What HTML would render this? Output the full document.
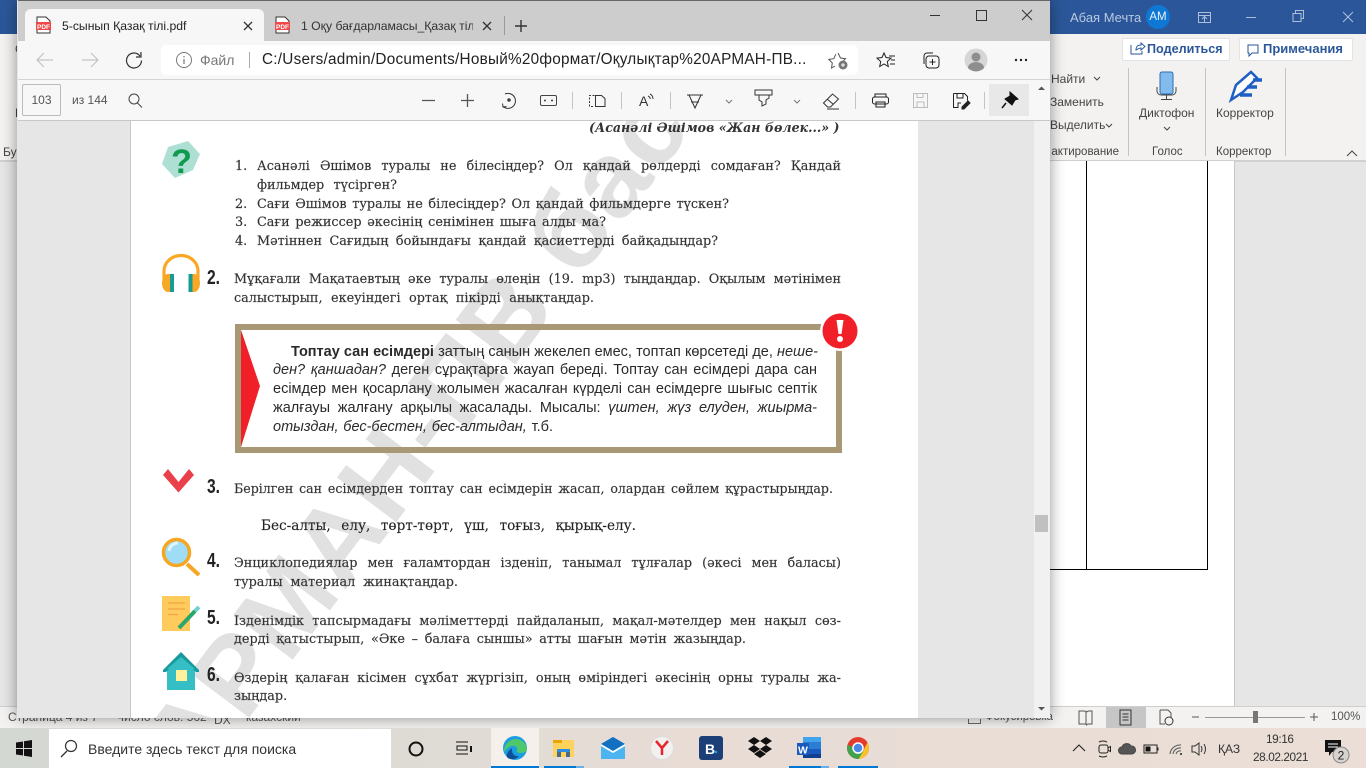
<!DOCTYPE html>
<html lang="ru">
<head>
<meta charset="utf-8">
<title>PDF</title>
<style>
html,body{margin:0;padding:0;width:1366px;height:768px;overflow:hidden;background:#e6e6e6}
body{position:relative;font-family:"Liberation Sans","Noto Sans CJK SC",sans-serif;color:#222}
div,span.a{position:absolute;box-sizing:border-box}
.t{white-space:nowrap}
.s{position:absolute;white-space:nowrap;font-family:"DejaVu Serif","Liberation Serif",serif;font-size:12.8px;line-height:18px;height:18px;margin-top:1.5px;color:#333;text-align:justify;text-align-last:justify;-webkit-text-stroke:.15px #333}
.b{position:absolute;white-space:nowrap;font-family:"Liberation Sans",sans-serif;font-size:14.5px;line-height:18px;height:18px;margin-top:1px;color:#2a2a2a;text-align:justify;text-align-last:justify}
.n{position:absolute;left:207px;margin-top:1px;font:bold 20px/22px "Liberation Sans",sans-serif;color:#222;transform:scaleX(.78);transform-origin:0 0}
.num{position:absolute;left:235px;margin-top:1.5px;font-family:"DejaVu Serif",serif;font-size:12.8px;line-height:18px;color:#333;white-space:nowrap;-webkit-text-stroke:.15px #333}
.r{position:absolute;font-size:12px;color:#444;white-space:nowrap;line-height:16px}
.sep{position:absolute;width:1px;background:#c4c4c4}
</style>
</head>
<body>
<!-- Word background -->
<div style="left:0;top:0;width:1366px;height:34px;background:#2b579a"></div>
<div style="left:0;top:34px;width:1366px;height:126px;background:#f3f2f1"></div>
<div style="left:0;top:160px;width:1366px;height:2px;background:#d0d0d0"></div>
<div style="left:1050px;top:161px;width:184px;height:546px;background:#fff"></div>
<div style="left:1234px;top:161px;width:1px;height:546px;background:#c6c6c6"></div>
<div style="left:1086px;top:161px;width:1px;height:409px;background:#000"></div>
<div style="left:1207px;top:161px;width:1px;height:409px;background:#000"></div>
<div style="left:1050px;top:569px;width:158px;height:1px;background:#000"></div>
<div class="t" style="left:1070px;top:10px;font-size:13px;line-height:16px;color:#b9c8df">Абая Мечта</div>
<div style="left:1146px;top:5px;width:24px;height:24px;border-radius:50%;background:#0f78d4;color:#e8f2fb;font-size:11.5px;line-height:24px;text-align:center">АМ</div>
<div style="left:1122px;top:38px;width:108px;height:23px;background:#fff;border:1px solid #e2e2e2;border-radius:2px"></div>
<div class="t" style="left:1147px;top:41px;font-size:12.6px;font-weight:bold;line-height:16px;color:#2b579a">Поделиться</div>
<div style="left:1239px;top:38px;width:114px;height:23px;background:#fff;border:1px solid #e2e2e2;border-radius:2px"></div>
<div class="t" style="left:1263px;top:41px;font-size:13px;font-weight:bold;line-height:16px;color:#2b579a">Примечания</div>
<div class="r" style="left:1051px;top:71px">Найти</div>
<div class="r" style="left:1050px;top:94px">Заменить</div>
<div class="r" style="left:1050px;top:117px">Выделить</div>
<div class="r" style="left:1050px;top:144px;width:69px;text-align:right;overflow:hidden;font-size:11.5px;direction:ltr">актирование</div>
<div class="r" style="left:1139px;top:105px">Диктофон</div>
<div class="r" style="left:1152px;top:144px;font-size:11.5px">Голос</div>
<div class="r" style="left:1216px;top:105px">Корректор</div>
<div class="r" style="left:1216px;top:144px;font-size:11.5px">Корректор</div>
<div class="sep" style="left:1128px;top:68px;height:88px"></div>
<div class="sep" style="left:1205px;top:68px;height:88px"></div>
<div class="sep" style="left:1285px;top:68px;height:88px"></div>
<div class="r" style="left:3px;top:144px">Буф</div>
<div class="r" style="left:15px;top:41px">С</div>
<div class="r" style="left:15px;top:105px">В</div>

<!-- Word status bar -->
<div style="left:0;top:706px;width:1366px;height:22px;background:#f3f2f1;border-top:1px solid #cfcfcf"></div>
<div class="t" style="left:8px;top:709px;font-size:12px;line-height:16px;color:#555">Страница 4 из 7</div>
<div class="t" style="left:116px;top:709px;font-size:12px;line-height:16px;color:#555">Число слов: 562</div>
<div class="t" style="left:214px;top:712px;font-size:12px;line-height:16px;color:#555">DX</div>
<div class="t" style="left:246px;top:709px;font-size:12px;line-height:16px;color:#555">казахский</div>
<div class="t" style="left:985px;top:709px;font-size:11.4px;line-height:16px;color:#555">Фокусировка</div>
<div style="left:968px;top:719px;width:13px;height:5px;border:1px solid #666;border-top:none"></div>
<div style="left:1106px;top:707px;width:40px;height:21px;background:#c6c6c6"></div>
<div class="t" style="left:1331px;top:709px;font-size:11.5px;line-height:16px;color:#555">100%</div>
<div style="left:1205px;top:717px;width:100px;height:1px;background:#999"></div>
<div style="left:1253px;top:711px;width:5px;height:12px;background:#777"></div>

<!-- Edge window -->
<div style="left:17px;top:0;width:1033px;height:718px;background:#e6e6e6;box-shadow:0 0 14px rgba(0,0,0,.42)"></div>
<div style="left:18px;top:0;width:1032px;height:1px;background:#666"></div>
<div style="left:18px;top:1px;width:1032px;height:40px;background:#cdcdcd"></div>
<div style="left:18px;top:41px;width:1032px;height:39px;background:#f7f7f7;border-bottom:1px solid #d4d4d4"></div>
<div style="left:18px;top:80px;width:1032px;height:41px;background:#f7f7f7;border-bottom:1px solid #c8c8c8"></div>
<div style="left:25px;top:9px;width:239px;height:33px;background:#f7f7f7;border-radius:6px 6px 0 0"></div>
<div class="t" style="left:62px;top:17px;font-size:12.2px;line-height:18px;color:#222">5-сынып Қазақ тілі.pdf</div>
<div class="t" style="left:301px;top:17px;width:172px;overflow:hidden;font-size:12.2px;line-height:18px;color:#333">1 Оқу бағдарламасы_Қазақ тілі</div>
<div style="left:161px;top:45px;width:697px;height:30px;background:#fff;border-radius:5px"></div>
<div class="t" style="left:200px;top:51px;font-size:14px;line-height:18px;color:#777">Файл</div>
<div style="left:249px;top:52px;width:1px;height:16px;background:#aaa"></div>
<div class="t" style="left:262px;top:51px;font-size:15.3px;line-height:18px;color:#222;letter-spacing:.25px">C:/Users/admin/Documents/Новый%20формат/Оқулықтар%20АРМАН-ПВ...</div>
<div style="left:22px;top:84px;width:39px;height:32px;border:1px solid #bbb;border-radius:2px;font-size:12px;line-height:30px;text-align:center;color:#555">103</div>
<div class="t" style="left:72px;top:92px;font-size:12px;line-height:16px;color:#555">из 144</div>
<div style="left:989px;top:84px;width:40px;height:32px;background:#e8e8e8;border-radius:2px"></div>
<div style="left:1034px;top:121px;width:16px;height:597px;background:#f1f1f1"></div>
<div style="left:1035px;top:515px;width:13px;height:17px;background:#c0c0c0"></div>

<!-- PDF page -->
<div style="left:130px;top:121px;width:788px;height:597px;background:#fff;border-left:1px solid #c8c8c8;overflow:hidden">
  <div class="t" style="left:36px;top:590px;font:bold 108px/108px 'Liberation Sans',sans-serif;color:#e1e1e1;transform:rotate(-53deg);transform-origin:0 50%;letter-spacing:2px">АРМАН-ПВ баспасы</div>
</div>

<div style="left:131px;top:121px;width:787px;height:14px;overflow:hidden">
  <div class="t" style="left:458px;top:-2px;font:italic bold 12.6px/18px 'DejaVu Serif',serif;color:#333">(Асанәлі Әшімов «Жан бөлек...» )</div>
</div>

<span class="num" style="top:156px">1.</span>
<div class="s" style="left:257px;top:156px;width:584px">Асанәлі Әшімов туралы не білесіңдер? Ол қандай рөлдерді сомдаған? Қандай</div>
<div class="s" style="left:257px;top:175px;width:140px">фильмдер түсірген?</div>
<span class="num" style="top:194px">2.</span>
<div class="s" style="left:257px;top:194px;width:472px">Сағи Әшімов туралы не білесіңдер? Ол қандай фильмдерге түскен?</div>
<span class="num" style="top:212px">3.</span>
<div class="s" style="left:257px;top:212px;width:349px">Сағи режиссер әкесінің сенімінен шыға алды ма?</div>
<span class="num" style="top:231px">4.</span>
<div class="s" style="left:257px;top:231px;width:461px">Мәтіннен Сағидың бойындағы қандай қасиеттерді байқадыңдар?</div>

<div class="n" style="top:266px">2.</div>
<div class="s" style="left:234px;top:269px;width:607px">Мұқағали Мақатаевтың әке туралы өлеңін (19. mp3) тыңдаңдар. Оқылым мәтінімен</div>
<div class="s" style="left:234px;top:288px;width:360px">салыстырып, екеуіндегі ортақ пікірді анықтаңдар.</div>

<!-- Rule box -->
<div style="left:235px;top:324px;width:607px;height:129px;border:6px solid #a89876"></div>
<div class="b" style="left:291px;top:342px;width:527px"><b>Топтау сан есімдері</b> заттың санын жекелеп емес, топтап көрсетеді де, <i>неше-</i></div>
<div class="b" style="left:273px;top:360px;width:544px"><i>ден? қаншадан?</i> деген сұрақтарға жауап береді. Топтау сан есімдері дара сан</div>
<div class="b" style="left:273px;top:379px;width:544px">есімдер мен қосарлану жолымен жасалған күрделі сан есімдерге шығыс септік</div>
<div class="b" style="left:273px;top:398px;width:544px">жалғауы жалғану арқылы жасалады. Мысалы: <i>үштен, жүз елуден, жиырма-</i></div>
<div class="b" style="left:273px;top:417px;width:280px"><i>отыздан, бес-бестен, бес-алтыдан,</i> т.б.</div>

<div class="n" style="top:475px">3.</div>
<div class="s" style="left:234px;top:478px;width:599px;font-size:12.6px">Берілген сан есімдерден топтау сан есімдерін жасап, олардан сөйлем құрастырыңдар.</div>
<div class="s" style="left:261px;top:515px;width:375px;font-size:13.6px;color:#222">Бес-алты, елу, төрт-төрт, үш, тоғыз, қырық-елу.</div>

<div class="n" style="top:549px">4.</div>
<div class="s" style="left:234px;top:553px;width:607px">Энциклопедиялар мен ғаламтордан ізденіп, танымал тұлғалар (әкесі мен баласы)</div>
<div class="s" style="left:234px;top:572px;width:224px">туралы материал жинақтаңдар.</div>

<div class="n" style="top:606px">5.</div>
<div class="s" style="left:234px;top:611px;width:607px">Ізденімдік тапсырмадағы мәліметтерді пайдаланып, мақал-мәтелдер мен нақыл сөз-</div>
<div class="s" style="left:234px;top:629px;width:512px">дерді қатыстырып, «Әке – балаға сыншы» атты шағын мәтін жазыңдар.</div>

<div class="n" style="top:663px">6.</div>
<div class="s" style="left:234px;top:668px;width:607px">Өздерің қалаған кісімен сұхбат жүргізіп, оның өміріндегі әкесінің орны туралы жа-</div>
<div class="s" style="left:234px;top:686px;width:56px">зыңдар.</div>

<!-- Taskbar -->
<div style="left:0;top:728px;width:1366px;height:40px;background:linear-gradient(90deg,#d4d8d2 0,#dedbd5 30%,#e8dcd5 50%,#eaded7 100%)"></div>
<div style="left:49px;top:729px;width:342px;height:39px;background:#fff"></div>
<div class="t" style="left:88px;top:740px;font-size:14px;line-height:18px;color:#333">Введите здесь текст для поиска</div>
<div style="left:491px;top:728px;width:48px;height:40px;background:#f5f0ec"></div>
<div style="left:491px;top:766px;width:48px;height:2px;background:#0078d4"></div>
<div style="left:544px;top:766px;width:32px;height:2px;background:#0078d4"></div>
<div style="left:576px;top:766px;width:8px;height:2px;background:#6aaee6"></div>
<div style="left:789px;top:766px;width:32px;height:2px;background:#0078d4"></div>
<div style="left:821px;top:766px;width:8px;height:2px;background:#6aaee6"></div>
<div style="left:838px;top:766px;width:40px;height:2px;background:#0078d4"></div>
<div class="t" style="left:1218px;top:741px;font-size:12px;line-height:16px;color:#333">ҚАЗ</div>
<div class="t" style="left:1266px;top:731px;font-size:11.8px;letter-spacing:-.4px;line-height:16px;color:#333">19:16</div>
<div class="t" style="left:1253px;top:749px;font-size:11.8px;letter-spacing:-.4px;line-height:16px;color:#333">28.02.2021</div>

<!-- All icons -->
<svg width="1366" height="768" viewBox="0 0 1366 768" style="position:absolute;left:0;top:0" fill="none">
  <!-- PDF tab icons -->
  <g>
    <path d="M37 17h9l4 4v12H37z" fill="#fff" stroke="#333" stroke-width="1"/>
    <rect x="36" y="22" width="15" height="8" fill="#f04848"/>
    <text x="43.5" y="28.8" font-size="6.5" font-weight="bold" text-anchor="middle" fill="#fff" font-family="Liberation Sans">PDF</text>
    <path d="M276 17h9l4 4v12h-13z" fill="#fff" stroke="#333" stroke-width="1"/>
    <rect x="275" y="22" width="15" height="8" fill="#f04848"/>
    <text x="282.5" y="28.8" font-size="6.5" font-weight="bold" text-anchor="middle" fill="#fff" font-family="Liberation Sans">PDF</text>
  </g>
  <g stroke="#333" stroke-width="1.3">
    <path d="M244 22l8 8M252 22l-8 8M483 22l8 8M491 22l-8 8"/>
    <path d="M504.500 16v19" stroke="#999" stroke-width="1"/>
    <path d="M515 26h12M521 20v12" stroke-width="1.4"/>
    <path d="M930 15.500h10M976.500 10.500h10v10h-10zM1022 10l10 10M1032 10l-10 10" stroke-width="1"/>
  </g>
  <!-- Nav -->
  <g stroke="#c4c4c4" stroke-width="1.2">
    <path d="M37 60h16M44 53l-7 7 7 7M82 60h16M91 53l7 7-7 7"/>
  </g>
  <path d="M140 56a7.500 7.500 0 1 0 1.500 4.500M141 52v5h-5" stroke="#333" stroke-width="1.2"/>
  <circle cx="184" cy="60" r="7.500" stroke="#777" stroke-width="1"/>
  <path d="M184 59v5M184 56v1.500" stroke="#777" stroke-width="1.200"/>
  <path d="M838 53l2.500 5 5 .7-3 3M835 66l-3.500 2 .8-5-3.500-3.600 5-.7 2-4.500" stroke="#555" stroke-width="1"/>
  <circle cx="843" cy="65" r="4.500" fill="#777"/><path d="M841 65h4M843 63v4" stroke="#fff" stroke-width="1"/>
  <path d="M884 53l2 4.500 5 .6-3.700 3.400 1 5-4.300-2.500-4.300 2.500 1-5-3.700-3.400 5-.6zM889 56h6M891 60h4M890 64h5" stroke="#222" stroke-width="1"/>
  <rect x="926" y="56" width="13" height="12" rx="3" stroke="#222"/><path d="M932.500 59v6M929.500 62h6" stroke="#222"/>
  <path d="M924 64v-8a3 3 0 0 1 3-3h6" stroke="#222"/>
  <circle cx="976" cy="60" r="11.500" fill="#d6d6d6"/><circle cx="976" cy="57" r="4.500" fill="#8e8e8e"/><path d="M968 68a8 6 0 0 1 16 0 11 11 0 0 1-16 0z" fill="#8e8e8e"/>
  <g fill="#222"><circle cx="1016" cy="60" r="1.200"/><circle cx="1021" cy="60" r="1.200"/><circle cx="1026" cy="60" r="1.200"/></g>
  <!-- PDF toolbar -->
  <g stroke="#444" stroke-width="1">
    <circle cx="134" cy="99" r="5"/><path d="M137.500 103l4.500 4.500"/>
    <path d="M422 100.500h13M461 100.500h13M467.500 94v13" stroke="#555" stroke-width="1.300"/>
    <path d="M505 94a7.500 7.500 0 1 1-2 12.500M502.500 103.500l.5 3.500 3.500-.5" stroke="#333"/>
    <circle cx="509" cy="100" r="1.300" fill="#333"/>
    <rect x="540.500" y="95.500" width="16" height="10" rx="1.500"/><path d="M544 100.500h2M551 100.500h2" stroke-width="1.500"/>
    <path d="M594.500 95.500h-5v11h5" stroke="#333" stroke-dasharray="2 1.500"/><path d="M595.500 95.500h6l3.500 3v8h-9.500z" stroke="#333"/>
    <path d="M687 95h16M689 95l6 13 6-13" stroke="#333"/><path d="M691 102h8" stroke="#333"/>
    <path d="M755 90h17v5h-17zM759 95v5l3 2v4l4-2v-4l3-2v-3" stroke="#333"/>
    <path d="M726 100l3 3 3-3M794 100l3 3 3-3" stroke="#777"/>
    <path d="M823.500 103l9-9 6 5-8 8h-3zM827 99l6 5M827 109h12" stroke="#333"/>
    <rect x="872.500" y="97" width="16" height="7" rx="2" stroke="#222"/><path d="M875 97v-3h11v3M876 102h9v5h-9z" stroke="#222"/>
    <path d="M913.500 93.500h14v14h-14zM917 93.500v4h6v-4M917 107v-5h7v5" stroke="#bbb"/>
    <path d="M953.500 93.500h11l3 3v4M953.500 93.500v14h5M957 94v4h6v-4M958 107v-4h3" stroke="#222"/>
    <path d="M962 107l6-6 2 2-6 6h-2z" fill="#222" stroke="#222"/>
    <path d="M1006 103l-4 5" stroke="#111" stroke-width="1.500"/>
    <path d="M1010 92l8 7-3 1-3 5-7-6 5-3z" fill="#111" stroke="#111"/>
  </g>
  <g fill="#c4c4c4"><rect x="572" y="92" width="1" height="17"/><rect x="621" y="92" width="1" height="17"/><rect x="670" y="92" width="1" height="17"/><rect x="855" y="92" width="1" height="17"/><rect x="984" y="92" width="1" height="17"/></g>
  <text x="639" y="106" font-size="14" fill="#333" font-family="Liberation Sans">A</text>
  <path d="M650 94c2 1 3 3 3 5M648 96c1.500 .5 2 1.500 2.300 3" stroke="#333"/>
  <path d="M1038 90l3.500-3.500 3.500 3.500z" fill="#555"/>
  <path d="M1038 707l3.500 3.500 3.500-3.500z" fill="#555"/>

  <!-- Book icons -->
  <path d="M188 141l12 13-7 16-18 8-13-14 6-17z" fill="#aedfd3"/>
  <text x="181.500" y="173" font-size="34" font-weight="bold" text-anchor="middle" fill="#0f9a4f" font-family="Liberation Sans">?</text>
  <path d="M164 279v-8a17 15.500 0 0 1 34 0v8" stroke="#f9a825" stroke-width="3.200"/>
  <path d="M170 274h-2a6 9 0 0 0 0 18h2zM192 274h2a6 9 0 0 1 0 18h-2z" fill="#f9a825"/>
  <rect x="170" y="274" width="4" height="18" fill="#179c94"/><rect x="188.500" y="274" width="4" height="18" fill="#179c94"/>

  <circle cx="840" cy="331" r="20" fill="#fff"/>
  <circle cx="840" cy="331" r="17.500" fill="#f01f28"/>
  <path d="M836.500 320h7l-2 14h-3z" fill="#fff"/><circle cx="840" cy="339" r="3" fill="#fff"/>
  <path d="M241 330l19 56-19 61z" fill="#f01f28"/>
  <path d="M163 475l5-6 10.500 13 10.500-13 5 6-15.500 17.500z" fill="#ea4049"/>

  <circle cx="176.500" cy="552.500" r="13" fill="#9fdcf5" stroke="#f6a623" stroke-width="3.500"/>
  <path d="M169 551a9 9 0 0 1 9-8" stroke="#dff5fd" stroke-width="3"/>
  <path d="M187 564l12 11" stroke="#f6a623" stroke-width="4"/>
  <rect x="162" y="596" width="28" height="35" fill="#ffcb5c"/>
  <path d="M168 603h17M168 609h17M168 614.500h10" stroke="#f2a44a" stroke-width="1.300"/>
  <path d="M179 628l16-17" stroke="#2aa56b" stroke-width="4"/><path d="M195 611l4-4" stroke="#6fd0d4" stroke-width="4"/>
  <rect x="167" y="667" width="28" height="23" fill="#35bfc4"/>
  <path d="M163 670l18-18 18 18v2h-3l-15-14-15 14h-3z" fill="#179a9e"/>
  <path d="M167 669l14-12 14 12z" fill="#35bfc4"/>
  <rect x="176" y="670" width="11" height="11" fill="#fff19c"/>

  <!-- Word title -->
  <g stroke="#aebfd9" stroke-width="1">
    <path d="M1198.500 12.500h12v10h-12zM1198.500 15.500h12M1204.500 22v-5M1202 19l2.500-2.500 2.500 2.500"/>
    <path d="M1246 17.500h10M1293 13.500h8v8h-8zM1295.500 13v-2.500h8v8h-2.500M1343 12l10 10M1353 12l-10 10"/>
  </g>
  <path d="M1131 45v9h11v-3M1136 50c0-4 2-5 5-5v-2l4 3.500-4 3.500v-2c-2 0-3 1-5 2z" stroke="#2b579a"/>
  <path d="M1248 45h10v8h-6l-3 3v-3h-1z" stroke="#2b579a"/>
  <rect x="1160" y="72" width="13" height="22" rx="2" fill="#83bcec" stroke="#2a6fb5"/>
  <path d="M1157 87v4a4 4 0 0 0 4 4h11a4 4 0 0 0 4-4v-4M1166.500 95v4M1161 99.500h11" stroke="#444"/>
  <path d="M1231 100l5-15 15-13 6 6-14 14z" fill="#fff" stroke="#1f5fc4" stroke-width="2.500"/>
  <path d="M1253 80h9M1247 87h10M1240 95h12" stroke="#1f5fc4" stroke-width="3.500"/>
  <path d="M1094 77l3 3 3-3M1106 124l3 3 3-3" stroke="#444"/>
  <path d="M1164 127l3 3 3-3" stroke="#444"/>
  <path d="M1347 156l5-5 5 5" stroke="#444"/>
  <!-- Status icons -->
  <path d="M1079 711h5q1.500 0 2.500 1 1-1 2.500-1h3v13h-4q-1 0-1.500 1-.5-1-1.500-1h-6zM1086 712v12" stroke="#555"/>
  <path d="M1120 710h11v15h-11zM1122.500 714h6M1122.500 717h6M1122.500 720h6" stroke="#333"/>
  <path d="M1160 710h8l3 3v5M1160 710v14h5" stroke="#555"/><circle cx="1169" cy="721" r="4" stroke="#333"/>
  <path d="M1192 717h7M1310 717h8M1314 713v8" stroke="#555"/>
  <!-- Taskbar icons -->
  <path d="M16 742.500l7-1v6.500h-7zM24 741.300l8-1.300v8h-8zM16 749h7v6.500l-7-1zM24 749h8v8l-8-1.300z" fill="#111"/>
  <circle cx="71" cy="746" r="5.500" stroke="#333" stroke-width="1.200"/><path d="M67 751l-6 6" stroke="#333" stroke-width="1.300"/>
  <circle cx="416" cy="749" r="6.500" stroke="#111" stroke-width="2"/>
  <path d="M456 742h12M456 754h12M457 746h10v4h-10z" stroke="#111" stroke-width="1"/>
  <path d="M471 746v6" stroke="#111" stroke-width="2"/>
  <circle cx="515" cy="748" r="12" fill="#1b9de2"/>
  <path d="M504 752c0-8 6-13 12-13 6 0 11 5 11 10 0 3-3 4-7 4-2 0-4-1-3-3 1-3-3-5-6-4-3 1-5 4-7 6z" fill="#4fc86b"/>
  <path d="M507 757c2 3 9 3 12-1-4 1-8-2-7-8-3 2-6 6-5 9z" fill="#0f4f9a"/>
  <rect x="553" y="740" width="21" height="17" fill="#ffd35b"/><path d="M553 740h9v3h-9z" fill="#e8a400"/>
  <rect x="557" y="749" width="13" height="3" fill="#2c8ee0"/><rect x="557" y="752" width="4" height="5" fill="#4d6a8a"/><rect x="566" y="752" width="4" height="5" fill="#4d6a8a"/>
  <path d="M601 744l12-7 12 7v15h-24z" fill="#4cb4f0"/><path d="M601 744l12-7 12 7-12 7z" fill="#1170c0"/>
  <path d="M601 744l12 7 12-7v2l-12 7-12-7z" fill="#fff"/>
  <circle cx="662" cy="748" r="11.500" fill="#f3f1ef" stroke="#ddd"/>
  <path d="M656 741l6 7v7M668 741l-6 7" stroke="#e8242c" stroke-width="2.500"/>
  <rect x="699" y="736" width="24" height="24" rx="3" fill="#1c3f78"/>
  <text x="705" y="754" font-size="14" font-weight="bold" fill="#fff" font-family="Liberation Sans">B</text><circle cx="716" cy="752" r="1.300" fill="#17a4e8"/>
  <path d="M748 741l6-4 6 4-6 4zM760 741l6-4 6 4-6 4zM748 749l6-4 6 4-6 4zM760 749l6-4 6 4-6 4zM754 754l6-4 6 4-6 4z" fill="#111"/>
  <rect x="803" y="737" width="18" height="21" fill="#2b7cd3"/><rect x="803" y="737" width="18" height="5" fill="#41a5ee"/><rect x="803" y="749" width="18" height="5" fill="#185abd"/><rect x="803" y="754" width="18" height="4" fill="#103f91"/>
  <rect x="797" y="743" width="12" height="12" fill="#185abd"/><text x="798" y="753.500" font-size="10.500" font-weight="bold" fill="#fff" font-family="Liberation Sans">W</text>
  <circle cx="858" cy="748" r="11" fill="#e33b2e"/><path d="M867.500 742.500a11 11 0 0 1-9 16.500l5-9z" fill="#fbc02d"/><path d="M847.500 745a11 11 0 0 0 11 14l5-8z" fill="#3fa34d"/>
  <circle cx="858" cy="748" r="5" fill="#4a88e8" stroke="#fff" stroke-width="1.500"/>
  <!-- Tray -->
  <path d="M1073 751l6-6 6 6" stroke="#222" stroke-width="1.100"/>
  <rect x="1099" y="745" width="9" height="8" rx="2" stroke="#222"/><path d="M1108 748l2.500-1.500v5l-2.500-1.500M1099 742q4-2 8 0M1099 756q4 2 8 0" stroke="#222"/>
  <path d="M1122 754a3.500 3.500 0 0 1 0-7 5 5 0 0 1 9-1 4 4 0 0 1 1 8z" fill="#555" stroke="#444"/>
  <rect x="1144" y="745" width="13" height="8" stroke="#222"/><rect x="1145.500" y="746.500" width="5" height="5" fill="#111"/><rect x="1157" y="747.500" width="1.500" height="3" fill="#222"/>
  <path d="M1170 754a10 10 0 0 1 11-9M1173 754a7 7 0 0 1 8-6M1176 754a4 4 0 0 1 5-3" stroke="#555"/><circle cx="1181" cy="754" r="1" fill="#222"/>
  <path d="M1192 746h3l4-3v12l-4-3h-3zM1201 746q2 3 0 6M1204 744q3 5 0 10" stroke="#333"/>
  <path d="M1325 740h16v12h-9l-3 4v-4h-4z" fill="#111"/><path d="M1328 744h10M1328 747h10" stroke="#fff"/>
  <circle cx="1341" cy="755" r="8" fill="#d6d2cd" stroke="#888"/>
  <text x="1341" y="759.500" font-size="12" text-anchor="middle" fill="#222" font-family="Liberation Sans">2</text>
</svg>
</body>
</html>
